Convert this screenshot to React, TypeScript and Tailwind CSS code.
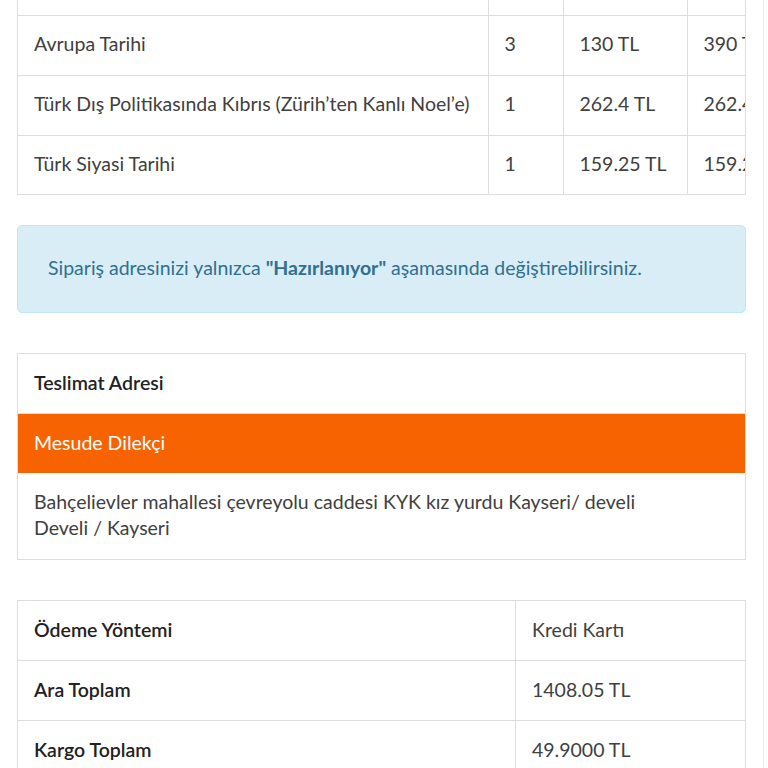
import React from "react";

const items = [
	{ name: "Avrupa Tarihi", qty: "3", price: "130 TL", total: "390 TL" },
	{ name: "Türk Dış Politikasında Kıbrıs (Zürih’ten Kanlı Noel’e)", qty: "1", price: "262.4 TL", total: "262.4 TL" },
	{ name: "Türk Siyasi Tarihi", qty: "1", price: "159.25 TL", total: "159.25 TL" },
];

const summary = [
	{ label: "Ödeme Yöntemi", value: "Kredi Kartı" },
	{ label: "Ara Toplam", value: "1408.05 TL" },
	{ label: "Kargo Toplam", value: "49.9000 TL" },
	{ label: "Genel Toplam", value: "1457.95 TL" },
];

const App = () => {
	return (
		<div className="relative min-h-[768px] bg-white overflow-hidden text-[19.5px] text-[#404040]" style={{ fontFamily: "Lato, 'Noto Sans', sans-serif" }}>
			<div className="absolute right-[4px] top-0 h-full w-px bg-[#ececec]" />
			<div className="ml-[17px] w-[729px] -mt-[45px]">
				{/* order items, scrolled so the header row is above the fold */}
				<div className="overflow-hidden border border-[#dddddd] border-t-0">
					<table className="w-[860px] border-collapse">
						<tbody>
							<tr className="h-[60px]">
								<td className="w-[470px] border-r border-b border-[#dddddd]" />
								<td className="w-[75px] border-r border-b border-[#dddddd]" />
								<td className="w-[124px] border-r border-b border-[#dddddd]" />
								<td className="border-b border-[#dddddd]" />
							</tr>
							{items.map((it, i) => (
								<tr key={i} className={i < items.length - 1 ? "h-[60px]" : "h-[59px]"}>
									<td className={"border-r border-[#dddddd] px-4 pb-[2px] " + (i < items.length - 1 ? "border-b" : "")}>{it.name}</td>
									<td className={"border-r border-[#dddddd] px-4 pb-[2px] " + (i < items.length - 1 ? "border-b" : "")}>{it.qty}</td>
									<td className={"border-r border-[#dddddd] px-4 pb-[2px] " + (i < items.length - 1 ? "border-b" : "")}>{it.price}</td>
									<td className={"border-[#dddddd] px-4 pb-[2px] whitespace-nowrap " + (i < items.length - 1 ? "border-b" : "")}>{it.total}</td>
								</tr>
							))}
						</tbody>
					</table>
				</div>

				{/* info alert */}
				<div className="mt-[30px] h-[88px] flex items-center px-[30px] pb-[2px] rounded-[5px] bg-[#d9edf7] border border-[#bce8f1] text-[#31708f]">
					<p>
						Sipariş adresinizi yalnızca <b className="font-bold">"Hazırlanıyor"</b> aşamasında değiştirebilirsiniz.
					</p>
				</div>

				{/* address */}
				<div className="mt-[40px] border border-[#dddddd]">
					<div className="h-[60px] flex items-center px-4 pb-[2px] font-semibold text-[#222222] border-b border-[#dddddd]">Teslimat Adresi</div>
					<div className="h-[59px] flex items-center px-4 pb-[2px] bg-[#f76300] text-white">Mesude Dilekçi</div>
					<div className="px-4 pt-[16px] pb-[18px] leading-[26px]">
						<p>Bahçelievler mahallesi çevreyolu caddesi KYK kız yurdu Kayseri/ develi</p>
						<p>Develi / Kayseri</p>
					</div>
				</div>

				{/* payment summary */}
				<div className="mt-[40px] border border-[#dddddd]">
					{summary.map((row, i) => (
						<div key={i} className={"flex h-[60px] " + (i < summary.length - 1 ? "border-b border-[#dddddd]" : "")}>
							<div className="w-[498px] flex items-center px-4 pb-[2px] font-semibold text-[#222222] border-r border-[#dddddd]">{row.label}</div>
							<div className="flex-1 flex items-center px-4 pb-[2px]">{row.value}</div>
						</div>
					))}
				</div>
			</div>
		</div>
	);
};

export default App;
